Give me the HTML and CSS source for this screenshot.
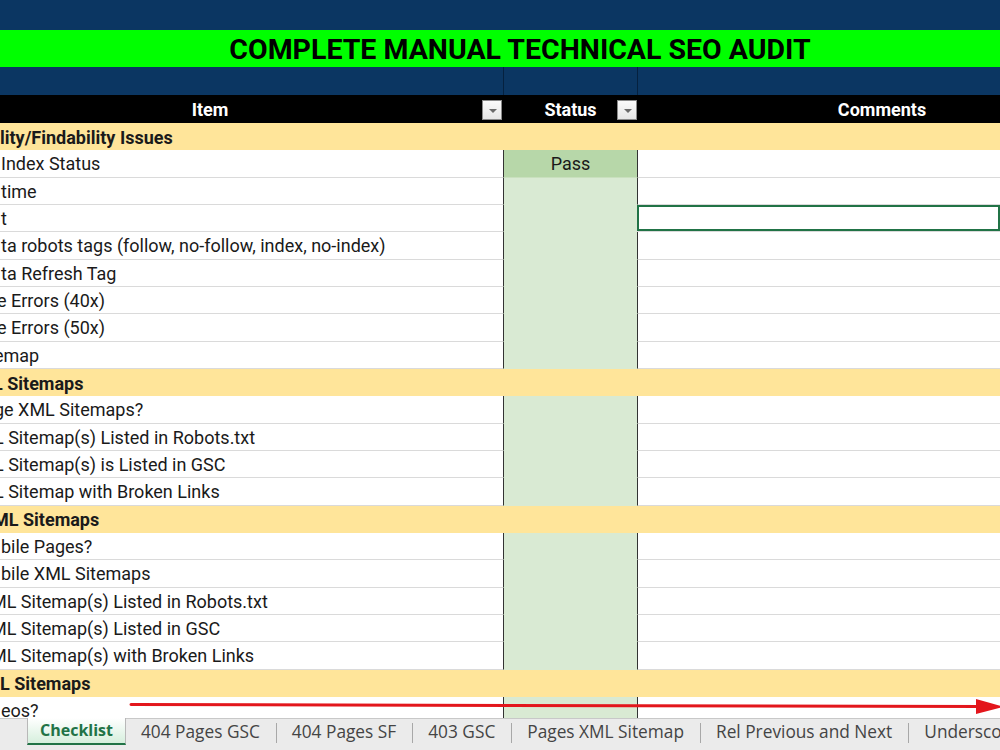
FILE: index.html
```html
<!DOCTYPE html>
<html lang="en">
<head>
    <meta charset="UTF-8">
    <meta name="viewport" content="width=device-width, initial-scale=1.0">
    <title>Complete Manual Technical SEO Audit</title>
    <link rel="stylesheet" href="styles.css">
</head>
<body>

    <div class="window">
        <div class="sheet">
            <div class="band band-top"></div>
            <div class="band band-title">
                <h1>COMPLETE MANUAL TECHNICAL SEO AUDIT</h1>
            </div>

            <div class="row row-navy">
                <div class="cell"></div>
                <div class="cell status"></div>
                <div class="cell"></div>
            </div>

            <div class="row row-head">
                <div class="cell head-item">Item<span class="filter"></span></div>
                <div class="cell head-status">Status<span class="filter"></span></div>
                <div class="cell head-comments">Comments</div>
            </div>

            <!-- the sheet is scrolled right, so item names start clipped -->
            <div class="row section"><div class="cell">lity/Findability Issues</div></div>
            <div class="row">
                <div class="cell item">Index Status</div>
                <div class="cell status pass">Pass</div>
                <div class="cell comment"></div>
            </div>
            <div class="row"><div class="cell item">time</div><div class="cell status"></div><div class="cell comment"></div></div>
            <div class="row"><div class="cell item">t</div><div class="cell status"></div><div class="cell comment selected"></div></div>
            <div class="row"><div class="cell item">ta robots tags (follow, no-follow, index, no-index)</div><div class="cell status"></div><div class="cell comment"></div></div>
            <div class="row"><div class="cell item">ta Refresh Tag</div><div class="cell status"></div><div class="cell comment"></div></div>
            <div class="row"><div class="cell item cut-s">e Errors (40x)</div><div class="cell status"></div><div class="cell comment"></div></div>
            <div class="row"><div class="cell item cut-s">e Errors (50x)</div><div class="cell status"></div><div class="cell comment"></div></div>
            <div class="row"><div class="cell item cut-m">emap</div><div class="cell status"></div><div class="cell comment"></div></div>

            <div class="row section"><div class="cell cut-m">L Sitemaps</div></div>
            <div class="row"><div class="cell item cut-m">ge XML Sitemaps?</div><div class="cell status"></div><div class="cell comment"></div></div>
            <div class="row"><div class="cell item cut-m">L Sitemap(s) Listed in Robots.txt</div><div class="cell status"></div><div class="cell comment"></div></div>
            <div class="row"><div class="cell item cut-m">L Sitemap(s) is Listed in GSC</div><div class="cell status"></div><div class="cell comment"></div></div>
            <div class="row"><div class="cell item cut-m">L Sitemap with Broken Links</div><div class="cell status"></div><div class="cell comment"></div></div>

            <div class="row section"><div class="cell cut-m">ML Sitemaps</div></div>
            <div class="row"><div class="cell item">bile Pages?</div><div class="cell status"></div><div class="cell comment"></div></div>
            <div class="row"><div class="cell item">bile XML Sitemaps</div><div class="cell status"></div><div class="cell comment"></div></div>
            <div class="row"><div class="cell item cut-l">ML Sitemap(s) Listed in Robots.txt</div><div class="cell status"></div><div class="cell comment"></div></div>
            <div class="row"><div class="cell item cut-l">ML Sitemap(s) Listed in GSC</div><div class="cell status"></div><div class="cell comment"></div></div>
            <div class="row"><div class="cell item cut-l">ML Sitemap(s) with Broken Links</div><div class="cell status"></div><div class="cell comment"></div></div>

            <div class="row section"><div class="cell">L Sitemaps</div></div>
            <div class="row"><div class="cell item">eos?</div><div class="cell status"></div><div class="cell comment"></div></div>
            <div class="row"><div class="cell item"></div><div class="cell status"></div><div class="cell comment"></div></div>
        </div>

        <div class="tabs">
            <span class="tab active">Checklist</span>
            <span class="tab">404 Pages GSC</span>
            <span class="tab">404 Pages SF</span>
            <span class="tab">403 GSC</span>
            <span class="tab">Pages XML Sitemap</span>
            <span class="tab">Rel Previous and Next</span>
            <span class="tab">Underscores in URLs</span>
        </div>

        <!-- red arrow drawn over the sheet -->
        <svg class="arrow" width="1000" height="750" viewBox="0 0 1000 750">
            <line x1="131" y1="704.5" x2="982" y2="706.5" stroke="#e3161c" stroke-width="3" stroke-linecap="round"/>
            <polygon points="976,699 1004,706.8 976,714" fill="#e3161c"/>
        </svg>
    </div>

</body>
</html>
```

FILE: styles.css
```css
body {
    margin: 0;
    padding: 0;
    font-family: Roboto, "Liberation Sans", sans-serif;
    color: #1a1a1a;
    background-color: #fff;
    overflow: hidden;
}

.window {
    position: relative;
    width: 1000px;
    height: 750px;
    display: flex;
    flex-direction: column;
    overflow: hidden;
}

.sheet {
    flex: 1;
    overflow: hidden;
}

.band {
    background-color: #0b3662;
}

.band-top {
    height: 30px;
}

.band-title {
    height: 37px;
    background-color: #00ff00;
    display: flex;
    align-items: center;
    justify-content: center;
    padding-left: 40px;
}

.band-title h1 {
    margin: 0;
    font-size: 28.5px;
    font-weight: 700;
    color: #000;
    padding-top: 1px;
}

.row {
    display: grid;
    grid-template-columns: 503px 135px 1fr;
    height: 27.33px;
    font-size: 18px;
}

.cell {
    display: flex;
    align-items: center;
    white-space: nowrap;
    overflow: hidden;
    border-bottom: 1px solid #dadada;
    box-sizing: border-box;
    padding-top: 1px;
}

.item {
    padding-left: 1px;
}

.cut-s {
    text-indent: -4px;
}

.cut-m {
    text-indent: -7px;
}

.cut-l {
    text-indent: -10px;
}

.status {
    justify-content: center;
    background-color: #d9ead3;
    border-left: 1px solid #333;
    border-right: 1px solid #333;
    border-bottom-color: #d9ead3;
}

.status.pass {
    background-color: #b7d7a9;
    border-bottom-color: #c9e0be;
}

.comment {
    background-color: #fff;
}

.selected {
    box-shadow: inset 0 0 0 2px #217346;
    margin-left: -1px;
}

.row-navy {
    height: 28px;
    background-color: #0b3662;
}

.row-navy .cell {
    background-color: #0b3662;
    border-bottom: none;
}

.row-navy .status {
    border-left: 1px solid #05213f;
    border-right: 1px solid #05213f;
}

.row-head {
    height: 28px;
    background-color: #000;
    color: #fff;
    font-weight: 700;
}

.row-head .cell {
    position: relative;
    justify-content: center;
    border-bottom: none;
    background-color: #000;
}

.head-item {
    padding-right: 83px;
}

.head-comments {
    padding-left: 126px;
}

.filter {
    position: absolute;
    right: 1px;
    top: 5px;
    width: 20px;
    height: 20px;
    box-sizing: border-box;
    background: linear-gradient(#fbfbfb, #e6e6e6);
    border: 1px solid #8a8a8a;
}

.filter::after {
    content: "";
    position: absolute;
    left: 6px;
    top: 8px;
    border-left: 4px solid transparent;
    border-right: 4px solid transparent;
    border-top: 4px solid #6b6b6b;
}

.section {
    display: block;
    background-color: #ffe59a;
    font-weight: 700;
}

.section .cell {
    height: 100%;
    border-bottom: none;
    background-color: #ffe59a;
}

.tabs {
    height: 32px;
    flex-shrink: 0;
    display: flex;
    align-items: flex-start;
    padding-left: 27px;
    background-color: #ebebeb;
    border-top: 1px solid #c8c8c8;
    box-sizing: border-box;
    font-family: "Open Sans", "Noto Sans", sans-serif;
    font-size: 17.3px;
    color: #444;
}

.tab {
    position: relative;
    height: 26px;
    line-height: 25px;
    padding: 0 16px;
    white-space: nowrap;
}

.tab + .tab::before {
    content: "";
    position: absolute;
    left: 0;
    top: 4px;
    height: 20px;
    border-left: 1px solid #a8a8a8;
}

.tab.active + .tab::before {
    display: none;
}

.tab.active {
    height: 27px;
    padding: 0 12px;
    margin-top: -1px;
    margin-right: -1px;
    font-size: 16px;
    font-weight: 700;
    color: #217346;
    background: linear-gradient(#ffffff, #d6efdd);
    border-left: 1px solid #b8b8b8;
    border-right: 1px solid #b8b8b8;
    border-bottom: 2px solid #217346;
    box-sizing: border-box;
}

.arrow {
    position: absolute;
    left: 0;
    top: 0;
    pointer-events: none;
}
```
